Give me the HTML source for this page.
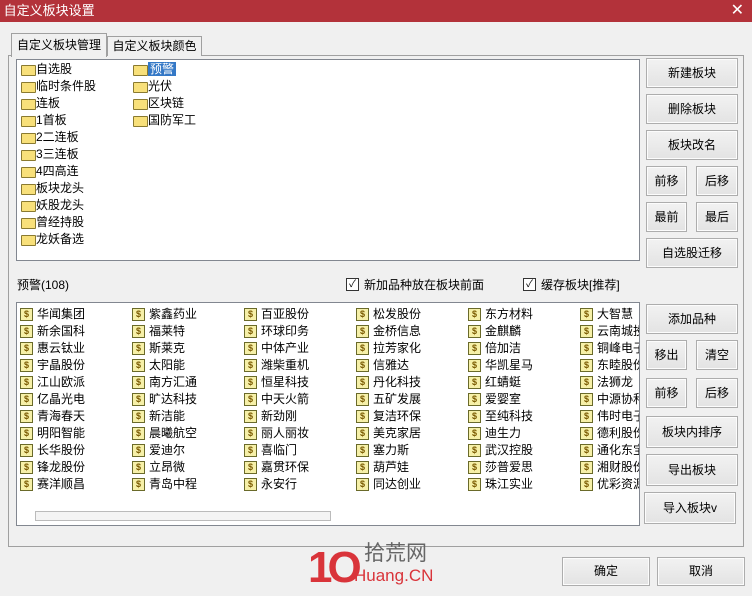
<!DOCTYPE html><html><head><meta charset="utf-8"><style>
body{margin:0;width:752px;height:596px;background:#f0f0f0;font-family:"Liberation Sans","Noto Sans CJK SC",sans-serif;font-size:12px;position:relative;overflow:hidden;color:#000}
.a{position:absolute}
.title{left:0;top:0;width:752px;height:22px;background:#b3323a;color:#fff;font-size:13px;line-height:22px}
.btn{position:absolute;border:1px solid #adadad;background:linear-gradient(#f2f2f2,#e3e3e3);text-align:center;box-sizing:border-box;box-shadow:inset 0 0 0 1px #fcfcfc}
.box{position:absolute;background:#fff;border:1px solid #828790;box-sizing:border-box;overflow:hidden}
.f{position:absolute;height:17px;line-height:17px;white-space:nowrap;padding-left:17px}
.f:before{content:"";position:absolute;left:2px;top:4px;width:13px;height:9px;background:#f8e07a;border:1px solid #8a7a30;border-radius:1px}
.s{position:absolute;height:17px;line-height:17px;white-space:nowrap;padding-left:18px;width:92px;overflow:hidden}
.s:before{content:"$";position:absolute;left:1px;top:2px;width:11px;height:11px;background:#f6f0a8;border:1px solid #6a6a2a;font-size:9px;line-height:11px;text-align:center;color:#7a5a00;font-weight:bold}
.cb{position:absolute;width:11px;height:11px;border:1px solid #333;background:#fff;font-size:10px;line-height:11px;text-align:center}
</style></head><body>
<div class="a title">&nbsp;自定义板块设置<span style="position:absolute;right:8px;font-size:16px">✕</span></div>
<div class="a" style="left:8px;top:55px;width:736px;height:492px;border:1px solid #a0a0a0;background:#f0f0f0;box-sizing:border-box"></div>
<div class="a" style="left:11px;top:33px;width:94px;height:23px;border:1px solid #a0a0a0;border-bottom:none;background:#f0f0f0;line-height:22px;text-align:center">自定义板块管理</div>
<div class="a" style="left:107px;top:36px;width:93px;height:19px;border:1px solid #a0a0a0;border-bottom:none;background:#f0f0f0;line-height:19px;text-align:center">自定义板块颜色</div>
<div class="box" style="left:16px;top:59px;width:624px;height:202px">
<div class="f" style="left:2px;top:1px">自选股</div><div class="f" style="left:2px;top:18px">临时条件股</div><div class="f" style="left:2px;top:35px">连板</div><div class="f" style="left:2px;top:52px">1首板</div><div class="f" style="left:2px;top:69px">2二连板</div><div class="f" style="left:2px;top:86px">3三连板</div><div class="f" style="left:2px;top:103px">4四高连</div><div class="f" style="left:2px;top:120px">板块龙头</div><div class="f" style="left:2px;top:137px">妖股龙头</div><div class="f" style="left:2px;top:154px">曾经持股</div><div class="f" style="left:2px;top:171px">龙妖备选</div>
<div class="f" style="left:114px;top:1px"><span style="background:#3478c6;color:#fff;padding:0 2px">预警</span></div><div class="f" style="left:114px;top:18px">光伏</div><div class="f" style="left:114px;top:35px">区块链</div><div class="f" style="left:114px;top:52px">国防军工</div>
</div>
<div class="btn" style="left:646px;top:58px;width:92px;height:30px;line-height:28px">新建板块</div>
<div class="btn" style="left:646px;top:94px;width:92px;height:30px;line-height:28px">删除板块</div>
<div class="btn" style="left:646px;top:130px;width:92px;height:30px;line-height:28px">板块改名</div>
<div class="btn" style="left:646px;top:166px;width:41px;height:30px;line-height:28px">前移</div>
<div class="btn" style="left:696px;top:166px;width:42px;height:30px;line-height:28px">后移</div>
<div class="btn" style="left:646px;top:202px;width:41px;height:30px;line-height:28px">最前</div>
<div class="btn" style="left:696px;top:202px;width:42px;height:30px;line-height:28px">最后</div>
<div class="btn" style="left:646px;top:238px;width:92px;height:30px;line-height:28px">自选股迁移</div>
<div class="a" style="left:17px;top:277px;line-height:16px">预警(108)</div>
<div class="cb" style="left:346px;top:278px">✓</div><div class="a" style="left:364px;top:276px">新加品种放在板块前面</div>
<div class="cb" style="left:523px;top:278px">✓</div><div class="a" style="left:541px;top:276px">缓存板块[推荐]</div>
<div class="box" style="left:16px;top:302px;width:624px;height:224px">
<div id="g"></div>
<div class="a" style="left:18px;top:208px;width:294px;height:8px;border:1px solid #bbb;background:#f4f4f4"></div>
</div>
<div class="btn" style="left:646px;top:304px;width:92px;height:30px;line-height:28px">添加品种</div>
<div class="btn" style="left:646px;top:340px;width:41px;height:30px;line-height:28px">移出</div>
<div class="btn" style="left:696px;top:340px;width:42px;height:30px;line-height:28px">清空</div>
<div class="btn" style="left:646px;top:378px;width:41px;height:30px;line-height:28px">前移</div>
<div class="btn" style="left:696px;top:378px;width:42px;height:30px;line-height:28px">后移</div>
<div class="btn" style="left:646px;top:416px;width:92px;height:32px;line-height:30px">板块内排序</div>
<div class="btn" style="left:646px;top:454px;width:92px;height:32px;line-height:30px">导出板块</div>
<div class="btn" style="left:644px;top:492px;width:92px;height:32px;line-height:30px">导入板块v</div>
<div class="btn" style="left:562px;top:557px;width:88px;height:29px;line-height:27px">确定</div>
<div class="btn" style="left:657px;top:557px;width:88px;height:29px;line-height:27px">取消</div>
<div class="a" style="left:308px;top:546px;font-size:44px;font-weight:bold;color:#d9343a;line-height:44px;letter-spacing:-5px">1O</div>
<div class="a" style="left:364px;top:543px;font-size:21px;color:#666;line-height:22px">拾荒网</div>
<div class="a" style="left:354px;top:566px;font-size:17px;color:#d9343a;line-height:20px">Huang.CN</div>
<script>
var c=[["华闻集团","新余国科","惠云钛业","宇晶股份","江山欧派","亿晶光电","青海春天","明阳智能","长华股份","锋龙股份","赛洋顺昌"],["紫鑫药业","福莱特","斯莱克","太阳能","南方汇通","旷达科技","新洁能","晨曦航空","爱迪尔","立昂微","青岛中程"],["百亚股份","环球印务","中体产业","潍柴重机","恒星科技","中天火箭","新劲刚","丽人丽妆","喜临门","嘉贯环保","永安行"],["松发股份","金桥信息","拉芳家化","信雅达","丹化科技","五矿发展","复洁环保","美克家居","塞力斯","葫芦娃","同达创业"],["东方材料","金麒麟","倍加洁","华凯星马","红蜻蜓","爱婴室","至纯科技","迪生力","武汉控股","莎普爱思","珠江实业"],["大智慧","云南城投","铜峰电子","东睦股份","法狮龙","中源协和","伟时电子","德利股份","通化东宝","湘财股份","优彩资源"]];
var h="";for(var i=0;i<6;i++)for(var j=0;j<11;j++)h+='<div class="s" style="left:'+(2+i*112)+'px;top:'+(3+j*17)+'px">'+c[i][j]+'</div>';
document.getElementById("g").innerHTML=h;
</script>
</body></html>
